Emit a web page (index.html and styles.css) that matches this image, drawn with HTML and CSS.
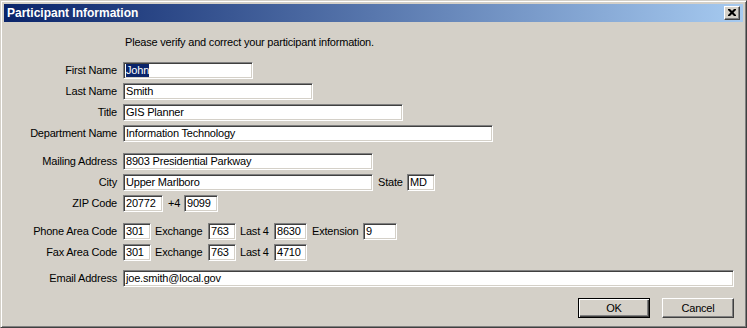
FILE: index.html
```html
<!DOCTYPE html>
<html>
<head>
<meta charset="utf-8">
<title>Participant Information</title>
<link rel="stylesheet" href="styles.css">
</head>
<body>
<div class="window">
  <div class="titlebar">
    <span class="title">Participant Information</span>
    <span class="close" aria-label="Close">
      <svg width="8" height="7" viewBox="0 0 8 7"><path d="M0 0h2l2 2 2-2h2v1l-2.5 2.5L8 6v1H6L4 5 2 7H0V6l2.5-2.5L0 1z" fill="#000"/></svg>
    </span>
  </div>
  <div class="content">
    <div class="intro">Please verify and correct your participant information.</div>

    <div class="group">
      <div class="row"><span class="label">First Name</span><span class="field w-first"><span class="sel">John</span></span></div>
      <div class="row"><span class="label">Last Name</span><span class="field w-last">Smith</span></div>
      <div class="row"><span class="label">Title</span><span class="field w-title">GIS Planner</span></div>
      <div class="row"><span class="label">Department Name</span><span class="field w-dept">Information Technology</span></div>
    </div>

    <div class="group">
      <div class="row"><span class="label">Mailing Address</span><span class="field w-addr">8903 Presidential Parkway</span></div>
      <div class="row"><span class="label">City</span><span class="field w-addr">Upper Marlboro</span><span class="ilabel l-state">State</span><span class="field w-state">MD</span></div>
      <div class="row"><span class="label">ZIP Code</span><span class="field w-zip">20772</span><span class="ilabel l-plus">+4</span><span class="field w-zip4">9099</span></div>
    </div>

    <div class="group">
      <div class="row"><span class="label">Phone Area Code</span><span class="field w-area">301</span><span class="ilabel l-exch">Exchange</span><span class="field w-exch">763</span><span class="ilabel l-last">Last 4</span><span class="field w-last4">8630</span><span class="ilabel l-ext">Extension</span><span class="field w-ext">9</span></div>
      <div class="row"><span class="label">Fax Area Code</span><span class="field w-area">301</span><span class="ilabel l-exch">Exchange</span><span class="field w-exch">763</span><span class="ilabel l-last">Last 4</span><span class="field w-last4">4710</span></div>
    </div>

    <div class="group">
      <div class="row"><span class="label">Email Address</span><span class="field w-email">joe.smith@local.gov</span></div>
    </div>

    <div class="buttons">
      <span class="btn default">OK</span>
      <span class="btn">Cancel</span>
    </div>
  </div>
</div>
</body>
</html>
```

FILE: styles.css
```css
html, body {
  margin: 0;
  padding: 0;
  background: #d4d0c8;
}

.window {
  box-sizing: border-box;
  width: 747px;
  height: 328px;
  background: #d4d0c8;
  border: 1px solid;
  border-color: #d4d0c8 #404040 #404040 #d4d0c8;
  box-shadow: inset 1px 1px #ffffff, inset -1px -1px #808080;
  padding: 3px;
  font-family: "Liberation Sans", Arial, sans-serif;
  font-size: 11px;
  letter-spacing: -0.2px;
  color: #000;
}

.titlebar {
  height: 18px;
  display: flex;
  align-items: center;
  justify-content: space-between;
  padding: 0 3px 0 3px;
  background: linear-gradient(to right, #0a246a, #a6caf0);
}

.title {
  color: #fff;
  font-weight: bold;
  font-size: 12px;
  letter-spacing: 0;
  line-height: 18px;
}

.close {
  box-sizing: border-box;
  width: 16px;
  height: 14px;
  background: #d4d0c8;
  border: 1px solid;
  border-color: #ffffff #404040 #404040 #ffffff;
  box-shadow: inset -1px -1px #808080;
  display: flex;
  align-items: center;
  justify-content: center;
  padding: 0 1px 1px 0;
}

.close svg {
  display: block;
}

.content {
  padding: 14px 9px 0 0;
}

.intro {
  margin-left: 121px;
  line-height: 13px;
  margin-bottom: 13px;
}

.group {
  display: flex;
  flex-direction: column;
  gap: 4px;
  margin-bottom: 11px;
}

.group:nth-of-type(4) {
  margin-bottom: 9px;
}

.row {
  display: flex;
  align-items: center;
  height: 17px;
}

.label {
  width: 113px;
  margin-right: 6px;
  text-align: right;
  line-height: 17px;
  white-space: nowrap;
}

.ilabel {
  line-height: 17px;
  white-space: nowrap;
  box-sizing: border-box;
}

.field {
  box-sizing: border-box;
  height: 17px;
  background: #fff;
  border: 1px solid;
  border-color: #808080 #ffffff #ffffff #808080;
  box-shadow: inset 1px 1px #404040, inset -1px -1px #d4d0c8;
  padding: 0 0 0 2px;
  line-height: 15px;
  white-space: nowrap;
  overflow: hidden;
}

.sel {
  background: #0a246a;
  color: #fff;
  display: inline-block;
  line-height: 13px;
  margin-top: 1px;
  vertical-align: top;
}

.w-first { width: 130px; }
.w-last { width: 190px; }
.w-title { width: 280px; }
.w-dept { width: 370px; }
.w-addr { width: 250px; }
.w-state { width: 28px; }
.w-zip { width: 40px; }
.w-zip4 { width: 34px; }
.w-area { width: 28px; }
.w-exch { width: 28px; }
.w-last4 { width: 33px; }
.w-ext { width: 34px; }
.w-email { width: 611px; }

.l-state { width: 34px; padding-left: 5px; }
.l-plus { width: 21px; padding-left: 5px; }
.l-exch { width: 57px; padding-left: 4px; }
.l-last { width: 38px; padding-left: 4px; }
.l-ext { width: 56px; padding-left: 5px; }

.buttons {
  display: flex;
  justify-content: flex-end;
  gap: 12px;
}

.btn {
  box-sizing: border-box;
  width: 72px;
  height: 20px;
  display: flex;
  align-items: center;
  justify-content: center;
  background: #d4d0c8;
  border: 1px solid;
  border-color: #ffffff #404040 #404040 #ffffff;
  box-shadow: inset -1px -1px #808080;
  font-size: 11px;
}

.btn.default {
  border: 1px solid #000;
  box-shadow: inset 1px 1px #ffffff, inset -1px -1px #404040, inset -2px -2px #808080;
}
```
